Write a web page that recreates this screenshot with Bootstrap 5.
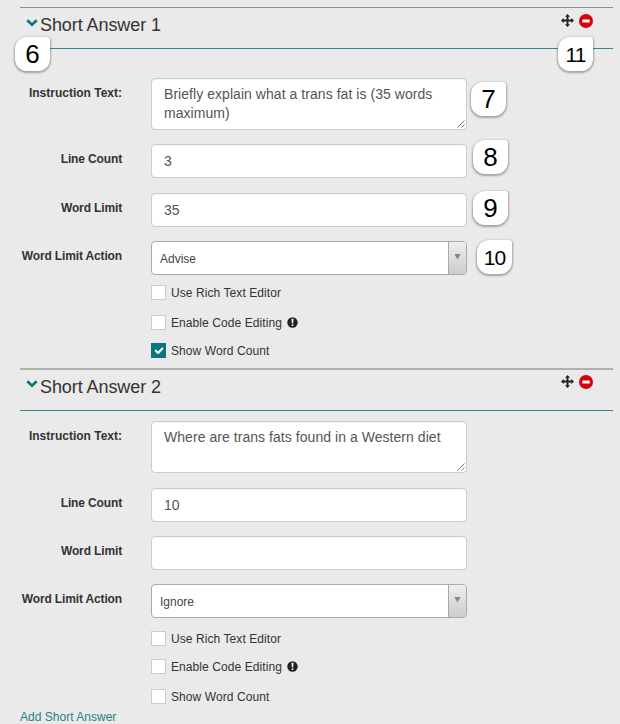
<!DOCTYPE html>
<html lang="en">
<head>
<meta charset="utf-8">
<meta name="viewport" content="width=device-width, initial-scale=1">
<title>Short Answer</title>
<link href="https://cdn.jsdelivr.net/npm/bootstrap@5.3.0/dist/css/bootstrap.min.css" rel="stylesheet">
<style>
body{background:#eaeaea;font:12px/18px "Liberation Sans",Arial,sans-serif;color:#333;height:724px;overflow:hidden}
.editor{padding-top:7px}
.question{margin:0 7px 0 20px;height:361px}
.question-2{height:340px}
.question-head{height:42px;border-top:1px solid #8f8f8f;border-bottom:1px solid #2b8c93;padding:0 20px 0 6px}
.question-2 .question-head{border-top:2px solid #b0b0b0;height:43px}
.question-head h2{font-size:18px;line-height:22px;margin:6px 0 0 2px;color:#333;letter-spacing:-.08px}
.chev{margin-top:11px}
.question-2 .chev{margin-top:10px}
.tools{gap:5px;padding-top:6px}
.question-2 .tools{padding-top:5px}
.field{display:grid;grid-template-columns:102px 316px;column-gap:29px;height:34px;margin-bottom:14.5px}
.question-2 .field{margin-bottom:14px}
.field label{text-align:right;font-weight:700;letter-spacing:-.14px;line-height:18px;padding-top:6px;white-space:nowrap}
.field-area label{letter-spacing:0}
.field-area{height:51px;margin-top:29px;margin-bottom:15px}
.question-2 .field-area{height:52px;margin-top:10px;margin-bottom:15px}
.form-control{font-size:14px;line-height:19px;color:#555;border:1px solid #ccc;border-radius:4px;padding:6px 12px;height:100%;resize:none;overflow:hidden;box-shadow:inset 0 1px 1px rgba(0,0,0,.04)}
textarea.form-control{padding-top:6px;letter-spacing:.05px}
.grip{right:2px;bottom:2px}
.picker{border:1px solid #aaa;border-radius:4px;background:#fff;overflow:hidden;color:#444}
.picker span{padding:1px 0 0 8px}
.picker i{width:18px;border-left:1px solid #aaa;background:linear-gradient(#eee,#ccc)}
.picker i svg{margin:12px 0 0 5px;display:block}
.checks{margin-left:131px;display:grid;grid-template-rows:30px 28px 15px;margin-top:-4.5px}
.question-2 .checks{grid-template-rows:28px 30px 15px;margin-top:-1px}
.tick-row{height:15px;gap:5px}
.form-check-input{width:15px;height:15px;margin:0;border:1px solid #ccc;border-radius:0!important;background-color:#fff;flex:none}
.form-check-input:checked{background-color:#087580;border-color:#087580;background-size:14px}
.tick-row label{white-space:nowrap;letter-spacing:.08px}
.add-link{color:#26818a;text-decoration:none;margin-left:20px;line-height:18px;width:max-content;letter-spacing:.02px}
.callout-num{width:35px;height:34px;background:#fff;color:#000;border-radius:12px 3px 12px 12px;box-shadow:0 1px 2px 1px rgba(0,0,0,.3);font-size:26px;line-height:1;padding-bottom:1px}
.callout-num.two{font-size:21px;padding-top:1px;letter-spacing:-1px}
.c6{left:15px;top:37px}.c7{left:471px;top:82px}.c8{left:473px;top:140px}.c9{left:473px;top:191px}.c10{left:477px;top:240px}.c11{left:558px;top:37px}
</style>
<script src="https://cdn.jsdelivr.net/npm/bootstrap@5.3.0/dist/js/bootstrap.bundle.min.js"></script>
</head>
<body class="position-relative">
<svg class="d-none">
  <symbol id="chevron" viewBox="0 0 12 8"><path d="M1.3 1.3 6 5.7l4.7-4.4" fill="none" stroke="#087580" stroke-width="2.7"/></symbol>
  <symbol id="move" viewBox="0 0 13 13"><path d="M6.5 1.5v10M1.5 6.5h10" stroke="#222" stroke-width="1.9"/><path d="M6.5 0 9 2.8H4zM6.5 13 4 10.2h5zM0 6.5 2.8 4v5zM13 6.5 10.2 9V4z" fill="#222"/></symbol>
  <symbol id="remove" viewBox="0 0 14 14"><circle cx="7" cy="7" r="7" fill="#d9000d"/><rect x="3.3" y="5.6" width="7.4" height="2.8" rx=".5" fill="#fff"/></symbol>
  <symbol id="info" viewBox="0 0 11 11"><circle cx="5.5" cy="5.5" r="5.2" fill="#222"/><path d="M4.5 1.8h2L6.2 6.6H4.8zM4.7 7.4h1.6v1.6H4.7z" fill="#fff"/></symbol>
  <symbol id="resize" viewBox="0 0 8 8"><path d="M.5 7.5l7-7M4.5 7.5l3-3" stroke="#777" fill="none"/></symbol>
  <symbol id="caret" viewBox="0 0 7 6"><path d="M.3 0h6.4L3.5 5.6z" fill="#888"/></symbol>
</svg>
<main class="editor">
<section class="question question-1">
  <div class="question-head d-flex align-items-start">
    <svg class="chev" width="12" height="8"><use href="#chevron"/></svg>
    <h2 class="fw-normal flex-grow-1">Short Answer 1</h2>
    <div class="tools d-flex"><svg width="13" height="13"><use href="#move"/></svg><svg width="14" height="14"><use href="#remove"/></svg></div>
  </div>
  <div class="field field-area"><label for="t1">Instruction Text:</label><div class="position-relative"><textarea id="t1" class="form-control">Briefly explain what a trans fat is (35 words maximum)</textarea><svg class="grip position-absolute" width="8" height="8"><use href="#resize"/></svg></div></div>
  <div class="field"><label for="l1">Line Count</label><input id="l1" class="form-control" value="3"></div>
  <div class="field"><label for="w1">Word Limit</label><input id="w1" class="form-control" value="35"></div>
  <div class="field"><label>Word Limit Action</label><div class="picker d-flex"><span class="flex-grow-1 align-self-center">Advise</span><i><svg width="7" height="6"><use href="#caret"/></svg></i></div></div>
  <div class="checks">
    <div class="tick-row d-flex align-items-center"><input id="a1" class="form-check-input" type="checkbox"><label for="a1">Use Rich Text Editor</label></div>
    <div class="tick-row d-flex align-items-center"><input id="b1" class="form-check-input" type="checkbox"><label for="b1">Enable Code Editing</label><svg width="11" height="11"><use href="#info"/></svg></div>
    <div class="tick-row d-flex align-items-center"><input id="d1" class="form-check-input" type="checkbox" checked><label for="d1">Show Word Count</label></div>
  </div>
</section>
<section class="question question-2">
  <div class="question-head d-flex align-items-start">
    <svg class="chev" width="12" height="8"><use href="#chevron"/></svg>
    <h2 class="fw-normal flex-grow-1">Short Answer 2</h2>
    <div class="tools d-flex"><svg width="13" height="13"><use href="#move"/></svg><svg width="14" height="14"><use href="#remove"/></svg></div>
  </div>
  <div class="field field-area"><label for="t2">Instruction Text:</label><div class="position-relative"><textarea id="t2" class="form-control">Where are trans fats found in a Western diet</textarea><svg class="grip position-absolute" width="8" height="8"><use href="#resize"/></svg></div></div>
  <div class="field"><label for="l2">Line Count</label><input id="l2" class="form-control" value="10"></div>
  <div class="field"><label for="w2">Word Limit</label><input id="w2" class="form-control"></div>
  <div class="field"><label>Word Limit Action</label><div class="picker d-flex"><span class="flex-grow-1 align-self-center">Ignore</span><i><svg width="7" height="6"><use href="#caret"/></svg></i></div></div>
  <div class="checks">
    <div class="tick-row d-flex align-items-center"><input id="a2" class="form-check-input" type="checkbox"><label for="a2">Use Rich Text Editor</label></div>
    <div class="tick-row d-flex align-items-center"><input id="b2" class="form-check-input" type="checkbox"><label for="b2">Enable Code Editing</label><svg width="11" height="11"><use href="#info"/></svg></div>
    <div class="tick-row d-flex align-items-center"><input id="d2" class="form-check-input" type="checkbox"><label for="d2">Show Word Count</label></div>
  </div>
</section>
<a class="add-link d-block" href="#">Add Short Answer</a>
</main>
<div class="callout-num c6 position-absolute d-flex align-items-center justify-content-center">6</div>
<div class="callout-num c7 position-absolute d-flex align-items-center justify-content-center">7</div>
<div class="callout-num c8 position-absolute d-flex align-items-center justify-content-center">8</div>
<div class="callout-num c9 position-absolute d-flex align-items-center justify-content-center">9</div>
<div class="callout-num two c10 position-absolute d-flex align-items-center justify-content-center">10</div>
<div class="callout-num two c11 position-absolute d-flex align-items-center justify-content-center">11</div>
</body>
</html>
